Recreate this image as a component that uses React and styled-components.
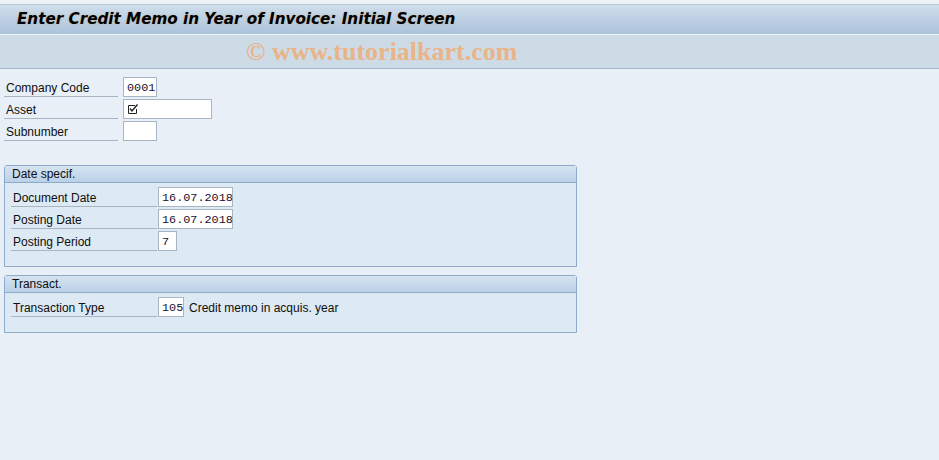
import React from 'react';
import styled, { createGlobalStyle } from 'styled-components';

const GlobalStyle = createGlobalStyle`
  html, body {
    margin: 0;
    padding: 0;
    background: #e8eff6;
    font-family: "Liberation Sans", Arial, sans-serif;
    font-size: 12px;
    color: #0e0e0e;
  }
`;

const Page = styled.div`
  width: 939px;
  height: 460px;
  background: #e8eff6;
  overflow: hidden;
`;

const TopStrip = styled.div`
  height: 4px;
  background: #eef2f7;
  border-bottom: 1px solid #b9c7d7;
`;

const TitleBar = styled.div`
  height: 30px;
  display: flex;
  align-items: center;
  padding-left: 17px;
  padding-bottom: 1px;
  box-sizing: border-box;
  background: linear-gradient(#cfdeec, #acc3db);
  border-bottom: 1px solid #f2f6fa;
  font-family: "DejaVu Sans", Verdana, sans-serif;
  font-weight: bold;
  font-style: italic;
  font-size: 15.2px;
  color: #000;
  text-shadow: 0 0 2px rgba(190, 140, 60, 0.45);
`;

const Toolbar = styled.div`
  height: 33px;
  display: flex;
  align-items: center;
  padding-left: 246px;
  background: #cddbe7;
  border-bottom: 1px solid #a6b6c9;
`;

const Watermark = styled.span`
  font-family: "Liberation Serif", "Times New Roman", serif;
  font-weight: bold;
  font-size: 26px;
  color: #e9b487;
`;

const Content = styled.div`
  padding: 8px 4px 0 4px;
  display: flex;
  flex-direction: column;
`;

const Rows = styled.div`
  display: flex;
  flex-direction: column;
  gap: 2px;
`;

const Row = styled.div`
  display: flex;
  align-items: center;
  height: 20px;
`;

const Label = styled.div`
  width: ${p => p.$w}px;
  height: 20px;
  box-sizing: border-box;
  padding: 4px 0 0 2px;
  border-bottom: 1px solid #a9b5c3;
  margin-right: ${p => p.$gap}px;
  white-space: nowrap;
`;

const Input = styled.div`
  width: ${p => p.$w}px;
  height: 20px;
  box-sizing: border-box;
  background: #fff;
  border: 1px solid #a8b5c4;
  padding: 3px 0 0 3px;
  font-family: "Liberation Mono", "Courier New", monospace;
  font-size: 11.8px;
  color: #20102c;
  display: flex;
  align-items: flex-start;
`;

const Desc = styled.span`
  margin-left: 5px;
  padding-top: 2px;
`;

const Group = styled.div`
  width: 573px;
  box-sizing: border-box;
  margin-top: ${p => p.$top}px;
  border: 1px solid #8fabcb;
  border-radius: 3px 3px 0 0;
  background: #dde9f3;
`;

const GroupHead = styled.div`
  height: 16px;
  padding-left: 7px;
  line-height: 16px;
  background: linear-gradient(#d5e3f1, #bbd1e8);
  border-bottom: 1px solid #8fabcb;
`;

const GroupBody = styled.div`
  padding: 4px 0 15px 6px;
`;

const CheckIcon = () => (
  <svg width="12" height="12" viewBox="0 0 12 12">
    <path d="M8 2.5 H1.5 V10.5 H9.5 V6" fill="none" stroke="#222" />
    <path d="M3 5.5 L5 8 L10.5 1.5" fill="none" stroke="#222" strokeWidth="1.4" />
  </svg>
);

export default function App() {
  return (
    <Page>
      <GlobalStyle />
      <TopStrip />
      <TitleBar>Enter Credit Memo in Year of Invoice: Initial Screen</TitleBar>
      <Toolbar>
        <Watermark>© www.tutorialkart.com</Watermark>
      </Toolbar>
      <Content>
        <Rows>
          <Row>
            <Label $w={114} $gap={5}>Company Code</Label>
            <Input $w={34}>0001</Input>
          </Row>
          <Row>
            <Label $w={114} $gap={5}>Asset</Label>
            <Input $w={89}><CheckIcon /></Input>
          </Row>
          <Row>
            <Label $w={114} $gap={5}>Subnumber</Label>
            <Input $w={34} />
          </Row>
        </Rows>

        <Group $top={24}>
          <GroupHead>Date specif.</GroupHead>
          <GroupBody>
            <Rows>
              <Row>
                <Label $w={146} $gap={1}>Document Date</Label>
                <Input $w={75}>16.07.2018</Input>
              </Row>
              <Row>
                <Label $w={146} $gap={1}>Posting Date</Label>
                <Input $w={75}>16.07.2018</Input>
              </Row>
              <Row>
                <Label $w={146} $gap={1}>Posting Period</Label>
                <Input $w={19}>7</Input>
              </Row>
            </Rows>
          </GroupBody>
        </Group>

        <Group $top={8}>
          <GroupHead>Transact.</GroupHead>
          <GroupBody>
            <Row>
              <Label $w={146} $gap={1}>Transaction Type</Label>
              <Input $w={26}>105</Input>
              <Desc>Credit memo in acquis. year</Desc>
            </Row>
          </GroupBody>
        </Group>
      </Content>
    </Page>
  );
}
